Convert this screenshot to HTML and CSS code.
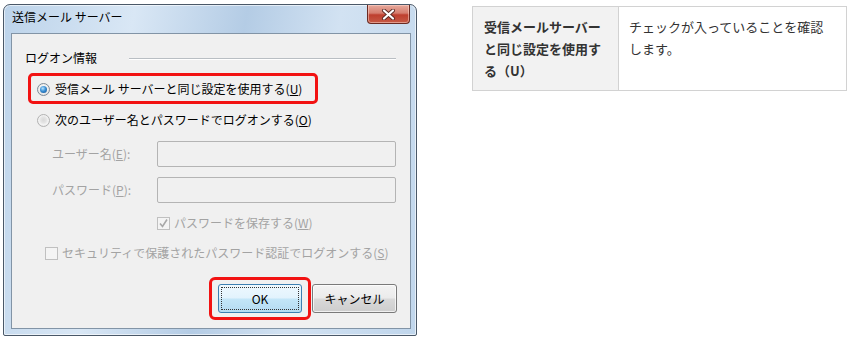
FILE: index.html
```html
<!DOCTYPE html>
<html lang="ja">
<head>
<meta charset="utf-8">
<title>送信メール サーバー</title>
<link rel="stylesheet" href="styles.css">
</head>
<body>
<div class="page">
  <div class="window">
    <div class="titlebar">
      <span class="title">送信メール サーバー</span>
      <div class="close">
        <svg width="15" height="11" viewBox="0 0 15 11"><path d="M3 1.5 L12 9.5 M12 1.5 L3 9.5" stroke="#5a2a24" stroke-width="4" stroke-linecap="round"/><path d="M3 1.5 L12 9.5 M12 1.5 L3 9.5" stroke="#ffffff" stroke-width="2.2" stroke-linecap="round"/></svg>
      </div>
    </div>
    <div class="client">
      <div class="group-head"><span>ログオン情報</span><span class="rule"></span></div>
      <div class="hl hl-radio">
        <div class="opt"><span class="rb on"></span><span>受信メール サーバーと同じ設定を使用する(<u>U</u>)</span></div>
      </div>
      <div class="opt opt2"><span class="rb"></span><span>次のユーザー名とパスワードでログオンする(<u>O</u>)</span></div>
      <div class="field f1"><span class="lbl">ユーザー名(<u>E</u>):</span><span class="input"></span></div>
      <div class="field f2"><span class="lbl">パスワード(<u>P</u>):</span><span class="input"></span></div>
      <div class="check c1"><span class="cb"><svg width="11" height="11" viewBox="0 0 11 11"><path d="M2 5.5 L4.5 8.5 L9 1.5" fill="none" stroke="#a8a8a8" stroke-width="1.6"/></svg></span><span>パスワードを保存する(<u>W</u>)</span></div>
      <div class="check c2"><span class="cb"></span><span>セキュリティで保護されたパスワード認証でログオンする(<u>S</u>)</span></div>
      <div class="buttons">
        <div class="hl hl-btn"><div class="btn ok"><span class="focus">OK</span></div></div>
        <div class="btn cancel">キャンセル</div>
      </div>
    </div>
  </div>
  <table class="info">
    <tr>
      <th>受信メールサーバーと同じ設定を使用する（U）</th>
      <td>チェックが入っていることを確認します。</td>
    </tr>
  </table>
</div>
</body>
</html>
```
FILE: styles.css
```css
* { box-sizing: border-box; }
html, body { margin: 0; padding: 0; background: #ffffff; }
body { font-family: "Noto Sans CJK JP", "Noto Sans", sans-serif; }

.page { display: flex; align-items: flex-start; width: 853px; height: 340px; }

.window {
  margin: 4px 0 0 3px;
  width: 414px;
  height: 332px;
  border: 1px solid #4a5868;
  border-radius: 7px 7px 2px 2px;
  background: linear-gradient(100deg, #bcd3ea 0%, #d9e7f5 28%, #b4cce5 52%, #d2e2f2 72%, #c0d6ec 100%);
  padding: 0 5px 6px 7px;
  display: flex;
  flex-direction: column;
  box-shadow: inset 0 0 0 1px rgba(255,255,255,0.6);
}

.titlebar {
  height: 28px;
  display: flex;
  align-items: flex-start;
  justify-content: space-between;
}
.title {
  font-size: 12px;
  line-height: 14px;
  color: #000;
  margin: 5px 0 0 1px;
}
.close {
  width: 43px;
  height: 19px;
  margin: 0 1px 0 0;
  border: 1px solid #6a2a22;
  border-top: none;
  border-radius: 0 0 4px 4px;
  background: linear-gradient(#e7a99c 0%, #d57d6e 45%, #be3f2e 55%, #c65a46 100%);
  display: flex;
  align-items: center;
  justify-content: center;
  box-shadow: inset 0 0 0 1px rgba(255,220,210,0.5);
}

.client {
  flex: 1;
  border: 1px solid #8294a6;
  background: #f0f0f0;
  font-size: 12px;
  line-height: 18px;
  color: #000;
  display: flex;
  flex-direction: column;
}

.group-head {
  display: flex;
  align-items: center;
  margin: 16px 14px 0 13px;
  line-height: 16px;
}
.group-head .rule {
  flex: 1;
  height: 1px;
  background: #b9bec3;
  margin-left: 32px;
  box-shadow: 0 1px 0 #ffffff;
}

.hl {
  border: 3px solid #f21212;
  border-radius: 5px;
}
.hl-radio {
  margin: 7px 0 0 16px;
  width: 290px;
  height: 31px;
  padding: 4px 0 0 6px;
}

.opt { display: flex; align-items: center; height: 18px; }
.opt2 { margin: 7px 0 0 25px; }

.rb {
  width: 13px;
  height: 13px;
  border-radius: 50%;
  border: 1px solid #b2b2b2;
  background: radial-gradient(circle at 50% 45%, #d8d8d8 0%, #e4e4e4 35%, #f4f4f4 60%, #d6d6d6 100%);
  margin-right: 5px;
  position: relative;
  flex: none;
}
.rb.on { border-color: #7e8b97; background: radial-gradient(circle at 50% 40%, #ffffff 0%, #e6e6e6 70%, #d2d2d2 100%); }
.rb.on::after {
  content: "";
  position: absolute;
  left: 2px;
  top: 2px;
  width: 7px;
  height: 7px;
  border-radius: 50%;
  background: radial-gradient(circle at 40% 35%, #b7e3ff 0%, #3a8fd4 45%, #0f4d8e 100%);
}

.field {
  display: flex;
  align-items: center;
  color: #a3a3a3;
  margin-left: 40px;
}
.f1 { margin-top: 12px; }
.f2 { margin-top: 10px; }
.lbl { width: 105px; }
.input {
  width: 239px;
  height: 26px;
  border: 1px solid #b4b4b4;
  border-radius: 2px;
  background: #f0f0f0;
}

.check {
  display: flex;
  align-items: center;
  height: 18px;
  color: #a3a3a3;
}
.c1 { margin: 11px 0 0 145px; }
.c2 { margin: 12px 0 0 33px; }
.cb {
  width: 13px;
  height: 13px;
  border: 1px solid #c0c0c0;
  background: #f4f4f4;
  margin-right: 4px;
  display: flex;
  align-items: center;
  justify-content: center;
  flex: none;
}

.buttons {
  display: flex;
  align-items: center;
  justify-content: flex-end;
  margin: 15px 13px 0 0;
}
.hl-btn {
  padding: 4px 6px;
  border-radius: 6px;
  margin-right: 1px;
}
.btn {
  height: 29px;
  border-radius: 3px;
  display: flex;
  align-items: center;
  justify-content: center;
  font-size: 12px;
  color: #000;
}
.ok {
  width: 84px;
  border: 1px solid #3c7fb1;
  background: linear-gradient(#eef8fe 0%, #e2f3fd 48%, #c3e6f8 52%, #b5dbf2 100%);
  padding: 2px;
}
.ok .focus {
  width: 100%;
  height: 100%;
  border: 1px dotted #333;
  display: flex;
  align-items: center;
  justify-content: center;
}
.cancel {
  width: 85px;
  border: 1px solid #7a7a7a;
  background: linear-gradient(#f3f3f3 0%, #ebebeb 48%, #d9d9d9 52%, #cdcdcd 100%);
  box-shadow: inset 0 0 0 1px rgba(255,255,255,0.7);
}

.info {
  margin: 6px 0 0 55px;
  border-collapse: collapse;
  width: 375px;
  font-size: 13px;
  line-height: 22px;
  color: #333;
}
.info th, .info td {
  border: 1px solid #d2d2d2;
  vertical-align: top;
  text-align: left;
  padding: 9px 14px 8px 10px;
}
.info th {
  width: 146px;
  background: #f2f2f2;
  font-weight: bold;
  padding: 9px 15px 8px 11px;
}
.info td { font-weight: normal; }
```
